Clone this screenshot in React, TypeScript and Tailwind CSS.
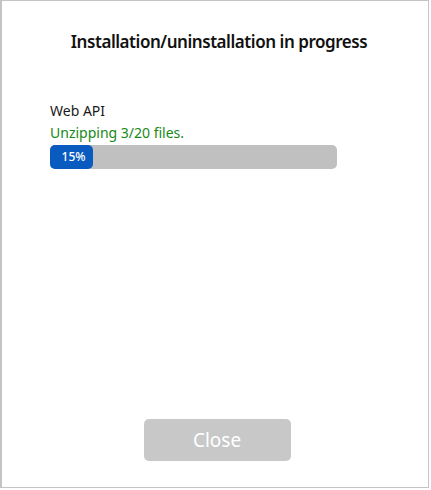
export default function App() {
  return (
    <div
      className="w-[429px] h-[488px] border border-l-2 border-[#c4c4c4] bg-white flex flex-col"
      style={{ fontFamily: '"Noto Sans", "Open Sans", sans-serif' }}
    >
      <h1 className="mt-[29px] pl-[8px] text-center text-[17px] leading-[24px] font-semibold tracking-[-0.45px] text-[#111]">
        Installation/uninstallation in progress
      </h1>
      <div className="mt-[47px] pl-[48px] flex flex-col">
        <div className="text-[14px] leading-[20px] text-[#1a1a1a]">Web API</div>
        <div className="mt-[2px] text-[14px] leading-[20px] text-[#168a16]">Unzipping 3/20 files.</div>
        <div className="mt-[2px] w-[287px] h-[24px] rounded-[5px] bg-[#c0c0c0] flex">
          <div className="w-[43px] h-full rounded-[5px] bg-[#0a5bbf] flex items-center justify-center pl-[4px] text-white text-[12px] font-medium">
            15%
          </div>
        </div>
      </div>
      <div className="mt-auto mb-[26px] flex justify-center pl-[4px]">
        <button className="w-[147px] h-[42px] rounded-[5px] bg-[#c8c8c8] text-white text-[19px]">
          Close
        </button>
      </div>
    </div>
  );
}
